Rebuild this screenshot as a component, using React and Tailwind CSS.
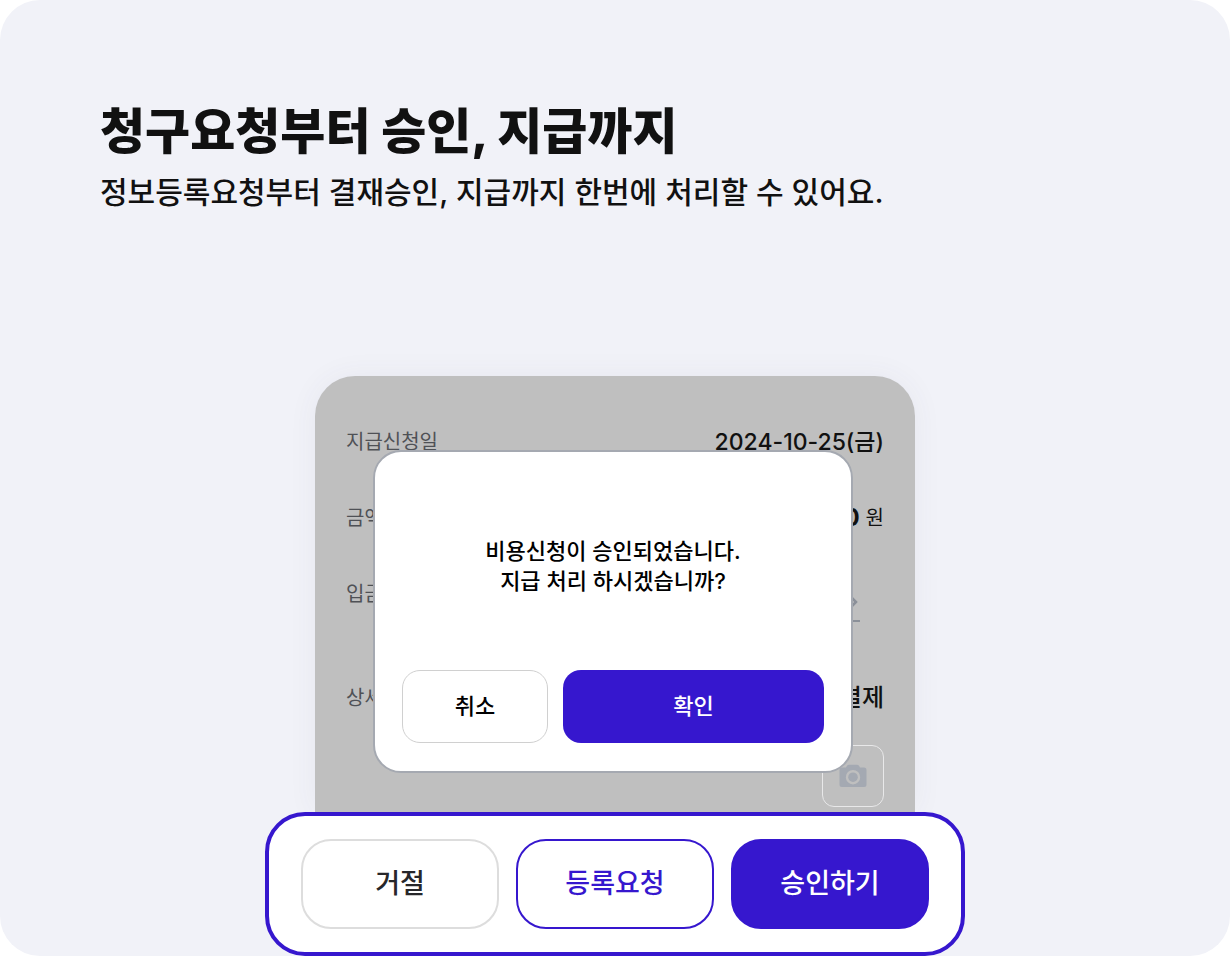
const actionBase = "h-[90px] flex-1 rounded-[30px] border-2 text-[27px] font-medium";

const actions = [
  { label: "거절", className: "border-[#dddddd] bg-white text-[#27272a]" },
  { label: "등록요청", className: "border-[#3617ce] bg-white text-[#3617ce]" },
  { label: "승인하기", className: "border-[#3617ce] bg-[#3617ce] text-white" },
];

export default function App() {
  return (
    <div className="min-h-screen bg-white font-['Inter','Noto_Sans_CJK_KR',sans-serif] text-[#111111]">
      <main className="flex min-h-screen flex-col rounded-[40px] bg-[#f1f2f8]">
        <header className="px-[100px] pt-[100px]">
          <h1 className="text-[49px] leading-[64px] font-extrabold">청구요청부터 승인, 지급까지</h1>
          <p className="mt-2 text-[30px] leading-[40px] font-medium">
            정보등록요청부터 결재승인, 지급까지 한번에 처리할 수 있어요.
          </p>
        </header>

        <div className="mt-auto flex flex-col items-center pt-40">
          <div className="relative w-full max-w-[600px]">
            <RequestCard />
            <ConfirmDialog />
          </div>
          <ActionBar />
        </div>
      </main>
    </div>
  );
}

function RequestCard() {
  return (
    <section className="h-[436px] rounded-t-[40px] bg-[#bfbfbf] px-[31px] pt-[46px] shadow-[0_0_30px_rgba(60,60,110,0.06)]">
      <Row label="지급신청일">
        <span className="text-[23px] font-medium">2024-10-25(금)</span>
      </Row>
      <Row label="금액" className="mt-9">
        <span className="flex items-center gap-1.5">
          <strong className="text-[24px] font-bold">0</strong>
          <span className="text-[20px]">원</span>
        </span>
      </Row>
      <Row label="입금" className="mt-9">
        <span className="mt-4 mr-6 flex h-10 w-16 items-end justify-end border-b-2 border-[#8b9099] pb-3">
          <ChevronIcon />
        </span>
      </Row>
      <Row label="상세" className="mt-16">
        <span className="text-[24px] font-medium">결제</span>
      </Row>
      <div className="mt-[27px] flex justify-end">
        <button
          type="button"
          aria-label="사진 첨부"
          className="grid size-[62px] place-items-center rounded-xl border border-[#e8e8e9] text-[#a4a9b2]"
        >
          <CameraIcon />
        </button>
      </div>
    </section>
  );
}

function Row({ label, className = "", children }) {
  return (
    <div className={`flex h-10 items-center justify-between ${className}`}>
      <span className="text-[20px] text-[#4f5156]">{label}</span>
      {children}
    </div>
  );
}

function ConfirmDialog() {
  return (
    <div
      role="dialog"
      aria-labelledby="confirm-message"
      className="absolute top-[74px] left-[58px] flex h-[323px] w-[480px] flex-col rounded-[28px] border-2 border-[#a5a9b1] bg-white px-[27px] pb-7 text-[22px] font-medium text-black"
    >
      <p id="confirm-message" className="mt-[84px] text-center leading-[30px]">
        비용신청이 승인되었습니다.
        <br />
        지급 처리 하시겠습니까?
      </p>
      <div className="mt-auto flex gap-[15px]">
        <button type="button" className="h-[73px] w-[146px] rounded-[18px] border border-[#d0d0d0] bg-white">
          취소
        </button>
        <button type="button" className="h-[73px] flex-1 rounded-[18px] bg-[#3617ce] text-white">
          확인
        </button>
      </div>
    </div>
  );
}

function ActionBar() {
  return (
    <div className="relative flex w-full max-w-[700px] gap-[17px] rounded-[40px] border-4 border-[#3617ce] bg-white px-8 py-[23px]">
      {actions.map((action) => (
        <button key={action.label} type="button" className={`${actionBase} ${action.className}`}>
          {action.label}
        </button>
      ))}
    </div>
  );
}

function ChevronIcon() {
  return (
    <svg width="8" height="12" viewBox="0 0 8 12" fill="none" stroke="#8b9099" strokeWidth="2.5" aria-hidden="true">
      <path d="M0 2l4 4-4 4" />
    </svg>
  );
}

function CameraIcon() {
  return (
    <svg width="28" height="24" viewBox="0 0 28 24" fill="currentColor" aria-hidden="true">
      <path
        fillRule="evenodd"
        d="M7 3.500 8 1.800Q8.800.800 10 .800H18Q19.200.800 20 1.800L21 3.500H25Q27.500 3.500 27.500 6V20.500Q27.500 23 25 23H3Q.500 23 .500 20.500V6Q.500 3.500 3 3.500ZM14 6a7.200 7.200 0 1 0 0 14.400A7.200 7.200 0 0 0 14 6Z"
      />
      <circle cx="14" cy="13.200" r="4.800" />
    </svg>
  );
}
